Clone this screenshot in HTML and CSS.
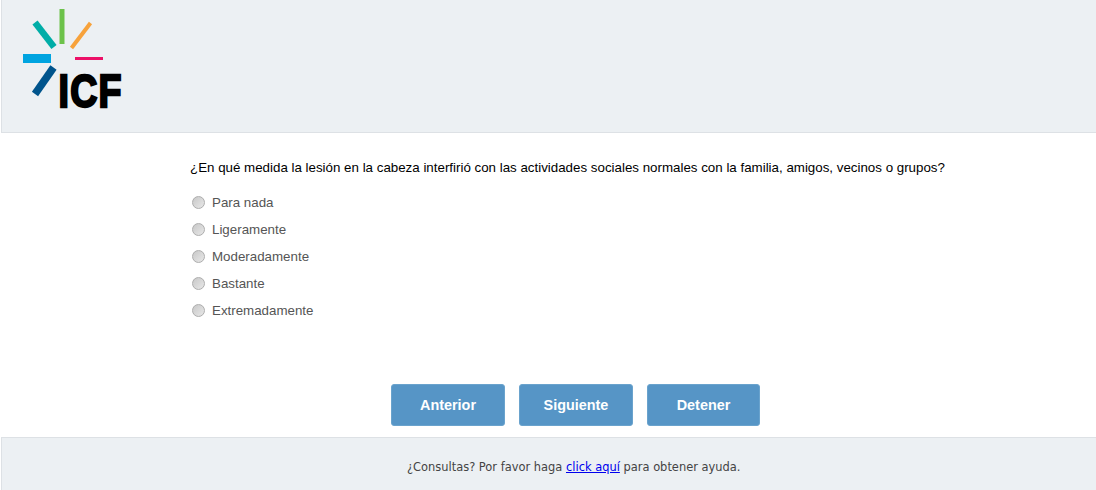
FILE: index.html
```html
<!DOCTYPE html>
<html lang="es">
<head>
<meta charset="utf-8">
<title>ICF</title>
<link rel="stylesheet" href="styles.css">
</head>
<body>
<header class="top">
  <svg class="logo" width="130" height="120" viewBox="0 0 130 120" aria-label="ICF">
    <rect x="59.5" y="9" width="5" height="35" fill="#6cc24a"/>
    <path d="M35 22.500 L54 47" stroke="#00ada7" stroke-width="6.500" fill="none"/>
    <path d="M90.500 23 L71.500 48" stroke="#f7a23b" stroke-width="4" fill="none"/>
    <rect x="23" y="54" width="28" height="9" fill="#00a4e0"/>
    <rect x="75" y="57" width="28" height="3" fill="#ec1067"/>
    <path d="M53.500 67.500 L35 94" stroke="#00548c" stroke-width="7.500" fill="none"/>
    <text class="logo-text" transform="translate(58.500 107) scale(.8 1)">ICF</text>
  </svg>
</header>
<main class="content">
  <p class="question">¿En qué medida la lesión en la cabeza interfirió con las actividades sociales normales con la familia, amigos, vecinos o grupos?</p>
  <div class="options">
    <label class="option"><span class="radio"></span>Para nada</label>
    <label class="option"><span class="radio"></span>Ligeramente</label>
    <label class="option"><span class="radio"></span>Moderadamente</label>
    <label class="option"><span class="radio"></span>Bastante</label>
    <label class="option"><span class="radio"></span>Extremadamente</label>
  </div>
  <div class="actions">
    <button class="btn">Anterior</button>
    <button class="btn">Siguiente</button>
    <button class="btn">Detener</button>
  </div>
</main>
<footer class="bottom">
  <p>¿Consultas? Por favor haga <a href="#">click aquí</a> para obtener ayuda.</p>
</footer>
</body>
</html>
```

FILE: styles.css
```css
* { box-sizing: border-box; }
html, body { margin: 0; padding: 0; }
body {
  width: 1096px;
  height: 490px;
  overflow: hidden;
  background: #fff;
  font-family: "Liberation Sans", Arial, sans-serif;
  display: flex;
  flex-direction: column;
}
.top {
  height: 133px;
  margin-left: 1px;
  background: #ecf0f3;
  border-left: 1px solid #dde1e5;
  border-bottom: 1px solid #dde1e5;
  flex: none;
}
.logo { display: block; margin-left: -2px; }
.logo-text {
  font-family: "Liberation Sans", Arial, sans-serif;
  font-weight: 700;
  font-size: 47px;
  letter-spacing: 1.500px;
  fill: #000;
  stroke: #000;
  stroke-width: 2.4px;
}
.content {
  flex: 1;
  display: flex;
  flex-direction: column;
  padding-left: 190px;
}
.question {
  margin: 27px 0 0;
  font-size: 13.330px;
  line-height: 16px;
  color: #000;
}
.options {
  margin-top: 13px;
  display: flex;
  flex-direction: column;
}
.option {
  height: 27px;
  display: flex;
  align-items: center;
  font-size: 13.330px;
  color: #555;
}
.radio {
  width: 13px;
  height: 13px;
  margin: 0 7px 0 2px;
  border-radius: 50%;
  border: 1px solid #adadad;
  background: linear-gradient(135deg, #c8c8c8, #e8e8e8);
}
.actions {
  margin-top: 60px;
  margin-left: 201px;
  display: flex;
  gap: 14px;
}
.btn {
  width: 114px;
  height: 42px;
  padding: 0;
  border: 1px solid #6aa3cd;
  border-radius: 3px;
  background: #5695c6;
  color: #fff;
  font-family: "Liberation Sans", Arial, sans-serif;
  font-size: 14.400px;
  font-weight: 700;
}
.btn:last-child { width: 113px; }
.bottom {
  height: 53px;
  flex: none;
  margin-left: 1px;
  background: #ecf0f3;
  border-top: 1px solid #dde1e5;
  border-left: 1px solid #dde1e5;
  display: flex;
  justify-content: flex-start;
  align-items: center;
  padding-left: 405px;
}
.bottom p {
  margin: 6px 0 0;
  font-family: "DejaVu Sans", Verdana, sans-serif;
  font-size: 11.440px;
  color: #444;
}
.bottom a { color: #00e; text-decoration: underline; }
```
